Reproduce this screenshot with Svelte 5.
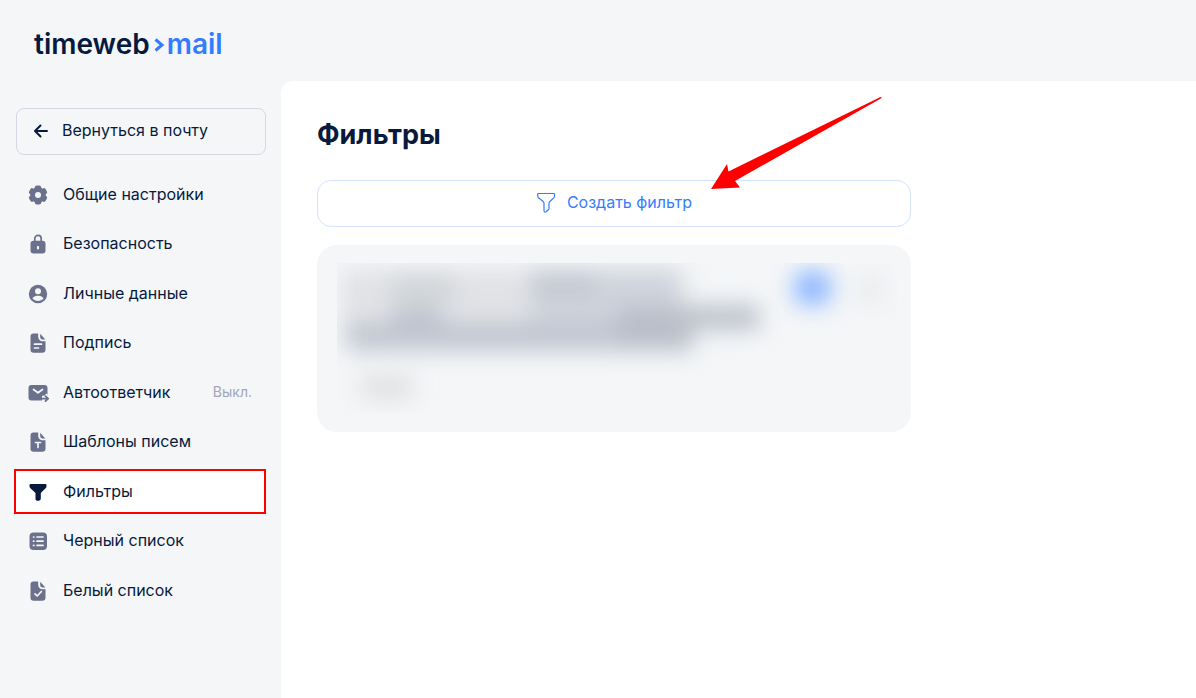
<script lang="ts">
	/**
	 * Mail settings page
	 * Sidebar navigation and the list of mail filters
	 */
	interface NavItem {
		id: string;
		label: string;
		note?: string;
	}

	const items: NavItem[] = [
		{ id: 'general', label: 'Общие настройки' },
		{ id: 'security', label: 'Безопасность' },
		{ id: 'personal', label: 'Личные данные' },
		{ id: 'signature', label: 'Подпись' },
		{ id: 'autoreply', label: 'Автоответчик', note: 'Выкл.' },
		{ id: 'templates', label: 'Шаблоны писем' },
		{ id: 'filters', label: 'Фильтры' },
		{ id: 'blacklist', label: 'Черный список' },
		{ id: 'whitelist', label: 'Белый список' }
	];

	let active = $state('filters');
</script>

{#snippet sheet()}
	<path d="M5.500.5h4.700v3.600a4.200 4.200 0 0 0 4.200 4.200h3.100v8.200a3.200 3.200 0 0 1-3.200 3.200H5.700a3.200 3.200 0 0 1-3.200-3.200v-13a3 3 0 0 1 3-3z" />
	<path d="M12.200.8 17.300 6.400h-3a2.100 2.100 0 0 1-2.100-2.100z" />
{/snippet}

{#snippet icon(id: string)}
	<svg class="icon" width="20" height="20" viewBox="0 0 20 20" fill="currentColor" aria-hidden="true">
		{#if id === 'general'}
			<g stroke="currentColor" stroke-width="4" stroke-linejoin="round">
				<path d="M8.800 2.500h2.400v15H8.800z" />
				<path d="M8.800 2.500h2.400v15H8.800z" transform="rotate(60 10 10)" />
				<path d="M8.800 2.500h2.400v15H8.800z" transform="rotate(120 10 10)" />
			</g>
			<circle cx="10" cy="10" r="7.800" />
			<circle class="cut" cx="10" cy="10" r="3" />
		{:else if id === 'security'}
			<path d="M6.800 8V4.500a3.200 3.200 0 0 1 6.400 0V8" fill="none" stroke="currentColor" stroke-width="1.700" />
			<rect x="2.500" y="6.800" width="15" height="12.700" rx="3" />
			<rect class="cut" x="8.900" y="12" width="2.200" height="3.400" rx=".8" />
		{:else if id === 'personal'}
			<circle cx="10" cy="10" r="9.200" />
			<circle class="cut" cx="10" cy="7.300" r="3" />
			<path class="cut" d="M4.400 14.200C6 12 8 11.700 10 11.700s4 .3 5.600 2.500c-1.500 1.900-3.400 2.700-5.600 2.700s-4.100-.8-5.600-2.700z" />
		{:else if id === 'signature'}
			{@render sheet()}
			<path class="line" d="M6.500 11.200h7M6.500 15h4" />
		{:else if id === 'autoreply'}
			<rect x=".5" y="2" width="19" height="15.500" rx="3" />
			<path class="line" d="m5.500 6.500 4.500 3.300 4.500-3.300" />
			<path d="M14 15.600h6M16.500 12.500l3.200 3-3.200 3" fill="none" stroke="var(--bg)" stroke-width="5.600" />
			<path d="M13 15.600h7M17.500 13.200l2.700 2.400-2.700 2.500" fill="none" stroke="currentColor" stroke-width="1.800" stroke-linecap="round" stroke-linejoin="round" />
		{:else if id === 'templates'}
			{@render sheet()}
			<path class="line" d="M7.500 10.500h5M10 10.500v5" />
		{:else if id === 'filters'}
			<path d="M2.500 2h15a1 1 0 0 1 1 1v1.300c0 .8-.3 1.500-.9 2L12.800 11v5.600c0 .9-.5 1.500-1.200 1.800-1.900.8-4.100.6-4.100-1.300V11L2.400 6.300a2.700 2.700 0 0 1-.9-2V3a1 1 0 0 1 1-1z" />
		{:else if id === 'blacklist'}
			<rect x="1.500" y="1.500" width="17.500" height="17.500" rx="4" />
			<path class="line" d="M5.500 6h.4M9 6h6M5.500 10.200h.4M9 10.200h6M5.500 14.400h.4M9 14.400h6" />
		{:else}
			{@render sheet()}
			<path class="line" d="m7 12.800 2.200 2.200 4.200-4.500" />
		{/if}
	</svg>
{/snippet}

<div class="page">
	<header class="header">
		<a class="logo" href="/" aria-label="timeweb mail">
			<span>timeweb</span>
			<svg width="13" height="18" viewBox="0 0 13 18" aria-hidden="true">
				<path d="m2.500 4.500 6.500 5.500-6.500 5.500" fill="none" stroke="currentColor" stroke-width="3" />
			</svg>
			<span class="logo-mail">mail</span>
		</a>
	</header>

	<aside class="sidebar">
		<button class="back" type="button">
			<svg width="16" height="16" viewBox="0 0 16 16" fill="none" stroke="currentColor" stroke-width="2" stroke-linecap="round" stroke-linejoin="round" aria-hidden="true">
				<path d="M14 9H2M7.500 3.500 2 9l5.500 5.500" />
			</svg>
			Вернуться в почту
		</button>

		<nav class="nav">
			{#each items as item (item.id)}
				<a
					class="nav-item"
					class:active={item.id === active}
					href="#{item.id}"
					aria-current={item.id === active ? 'page' : undefined}
					onclick={() => (active = item.id)}
				>
					{@render icon(item.id)}
					<span class="label">{item.label}</span>
					{#if item.note}
						<span class="note">{item.note}</span>
					{/if}
				</a>
			{/each}
		</nav>
	</aside>

	<main class="content">
		<h1>Фильтры</h1>

		<div class="create-wrap">
			<button class="create" type="button">
				<svg width="20" height="22" viewBox="0 0 20 22" fill="none" stroke="currentColor" stroke-width="1.200" stroke-linejoin="round" aria-hidden="true">
					<path d="M2.500 2.500h15.300a.8.8 0 0 1 .8.800v1.500c0 .9-.4 1.700-1.100 2.300l-3.400 3.100c-.7.600-1.100 1.400-1.100 2.300v5c0 .5-.2.900-.6 1.200l-2.300 2c-.9.700-2.100.1-2.100-1v-7.200c0-.9-.4-1.700-1.100-2.300L2.800 7.100a3 3 0 0 1-1.100-2.300V3.300a.8.8 0 0 1 .8-.8z" />
				</svg>
				Создать фильтр
			</button>
			<!-- Pointer to the create button -->
			<svg class="pointer" width="172" height="94" viewBox="0 0 172 94" aria-hidden="true">
				<path d="M0 93 16 68l1.500 7.500L169 1.200l1.500-.2-.2 1.300L24 85l5 6.500z" fill="#f00" />
			</svg>
		</div>

		<section class="card" aria-label="Фильтр">
			<svg class="hidden-rule" viewBox="0 0 560 150" aria-hidden="true">
				<defs>
					<filter id="soft" filterUnits="userSpaceOnUse" x="-40" y="-40" width="640" height="230" color-interpolation-filters="sRGB">
						<feGaussianBlur stdDeviation="11" />
					</filter>
				</defs>
				<g filter="url(#soft)">
					<rect x="4" y="6" width="346" height="80" fill="#e1e2e6" />
					<rect x="54" y="12" width="64" height="26" fill="#d0d5d8" />
					<rect x="194" y="6" width="146" height="76" fill="#cfd3dc" />
					<rect x="194" y="10" width="64" height="22" fill="#c2c7d1" />
					<rect x="56" y="44" width="48" height="40" fill="#bdc2cd" />
					<rect x="12" y="60" width="342" height="28" fill="#c0c5d0" />
					<rect x="280" y="44" width="76" height="42" fill="#b9bec9" />
					<rect x="330" y="42" width="92" height="25" fill="#bcc1ca" />
				</g>
				<g filter="url(#soft)">
					<rect x="24" y="112" width="52" height="24" fill="#dfe0e2" />
					<rect x="457" y="8" width="37" height="34" rx="10" fill="#8fb8ff" />
					<rect x="522" y="14" width="24" height="24" fill="#e8e9eb" />
				</g>
			</svg>
		</section>
	</main>
</div>

<style>
	:global(body) {
		margin: 0;
		background: #f4f6f8;
	}

	.page {
		--bg: #f4f6f8;
		--text: #071a3d;
		--blue: #347cff;
		display: grid;
		grid-template-columns: 281px 1fr;
		grid-template-rows: 81px 1fr;
		min-height: 100vh;
		background: var(--bg);
		color: var(--text);
		font-family: Inter, 'Liberation Sans', sans-serif;
		font-size: 16px;
		line-height: 24px;
	}

	.header {
		grid-column: 1 / -1;
		display: flex;
		align-items: center;
		padding: 6px 34px 0;
	}

	.logo {
		display: flex;
		align-items: center;
		gap: 3px;
		color: var(--text);
		font-size: 28px;
		font-weight: 600;
		line-height: 32px;
		text-decoration: none;
	}

	.logo svg,
	.logo-mail {
		color: var(--blue);
	}

	.logo svg {
		margin-right: -2px;
	}

	.sidebar {
		padding: 27px 15px 24px 16px;
	}

	.back {
		display: flex;
		align-items: center;
		gap: 13px;
		box-sizing: border-box;
		width: 100%;
		height: 47px;
		padding: 0 16px 3px;
		border: 1px solid #d5d8e2;
		border-radius: 8px;
		background: transparent;
		color: inherit;
		font: inherit;
		cursor: pointer;
	}

	.nav {
		display: flex;
		flex-direction: column;
		justify-content: space-between;
		min-height: 437px;
		margin-top: 19px;
	}

	.nav-item {
		display: flex;
		align-items: center;
		height: 41px;
		margin-right: 2px;
		padding: 0 12px;
		color: inherit;
		text-decoration: none;
	}

	.nav-item.active {
		background: #fff;
		outline: 2px solid #f00;
	}

	.icon {
		flex: none;
		margin-right: 15px;
		color: #6b708c;
		overflow: visible;
	}

	.active .icon {
		color: var(--text);
	}

	.icon .cut {
		fill: var(--bg);
	}

	.icon .line {
		fill: none;
		stroke: var(--bg);
		stroke-width: 1.7;
		stroke-linecap: round;
		stroke-linejoin: round;
	}

	.label,
	.note {
		padding-bottom: 2px;
	}

	.label {
		flex: 1;
	}

	.note {
		color: #a3a7b8;
		font-size: 14px;
	}

	.content {
		padding: 36px;
		border-top-left-radius: 12px;
		background: #fff;
	}

	h1 {
		margin: 0 0 28px;
		font-size: 27px;
		font-weight: 700;
		line-height: 35px;
	}

	.create-wrap {
		position: relative;
		max-width: 594px;
		margin-bottom: 18px;
	}

	.create {
		display: flex;
		align-items: center;
		justify-content: center;
		gap: 11px;
		box-sizing: border-box;
		width: 100%;
		height: 47px;
		padding: 0 0 3px;
		border: 1px solid #d3e2ff;
		border-radius: 14px;
		background: #fff;
		color: var(--blue);
		font: inherit;
		cursor: pointer;
	}

	.pointer {
		position: absolute;
		right: 28px;
		bottom: 37px;
		pointer-events: none;
	}

	.card {
		box-sizing: border-box;
		max-width: 594px;
		min-height: 187px;
		padding: 18px 14px 18px 20px;
		border-radius: 20px;
		background: var(--bg);
	}

	.hidden-rule {
		display: block;
		width: 100%;
		overflow: hidden;
	}
</style>
